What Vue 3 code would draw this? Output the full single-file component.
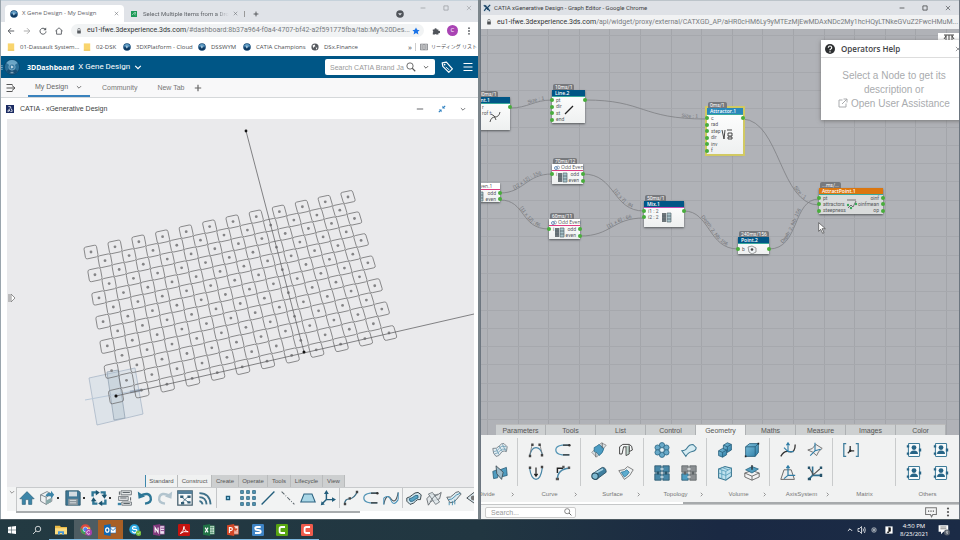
<script setup>
const corners = [[91, 252], [348, 197], [389, 333], [116, 396]]

function makeProjection([[x0, y0], [x1, y1], [x2, y2], [x3, y3]]) {
  const dx1 = x1 - x2, dx2 = x3 - x2, sx = x0 - x1 + x2 - x3
  const dy1 = y1 - y2, dy2 = y3 - y2, sy = y0 - y1 + y2 - y3
  const den = dx1 * dy2 - dx2 * dy1
  const g = (sx * dy2 - dx2 * sy) / den
  const h = (dx1 * sy - sx * dy1) / den
  const a = x1 - x0 + g * x1, b = x3 - x0 + h * x3
  const d = y1 - y0 + g * y1, e = y3 - y0 + h * y3
  return (i, j) => {
    const u = i / 22, v = j / 12, w = g * u + h * v + 1
    return [((a * u + b * v + x0) / w).toFixed(2), ((d * u + e * v + y0) / w).toFixed(2)]
  }
}

const project = makeProjection(corners)
const cells = []
for (let j = 0; j <= 12; j++) {
  for (let i = 0; i <= 22; i++) {
    if ((i + j) % 2) continue
    const s = 0.52, r = 0.36
    const at = (x, y) => project(i + x, j + y).join(' ')
    cells.push({
      dot: project(i, j),
      path: `M${at(-r, -s)}L${at(r, -s)}Q${at(s, -s)} ${at(s, -r)}L${at(s, r)}Q${at(s, s)} ${at(r, s)}L${at(-r, s)}Q${at(-s, s)} ${at(-s, r)}L${at(-s, -r)}Q${at(-s, -s)} ${at(-r, -s)}Z`
    })
  }
}

const bookmarks = [
  { icon: 'folder', text: '01-Dassault System...', w: 76 },
  { icon: 'folder', text: '02-DSK', w: 40 },
  { icon: 'compass', text: '3DXPlatform - Cloud', w: 75 },
  { icon: 'compass', text: 'DSSWYM', w: 45 },
  { icon: 'compass', text: 'CATIA Champions', w: 68 },
  { icon: 'globe', text: 'DSx.Finance', w: 60 }
]

const barTabs = [['Standard', 33], ['Construct', 34], ['Create', 27], ['Operate', 29], ['Tools', 23], ['Lifecycle', 32], ['View', 22]]
const tools = ['home', 'import', '.', 'save', '.', 'update', '.', 'struct', 'undo', 'redo', 'graph', 'rss', '|', 'dot', 'dots', 'line', 'dash', 'plane', 'axis', '|', 'spline', 'arc', 'curve3', '|', 'surf', 'surfx', 'surfy', 'surf2']

const ribbonTabs = ['Parameters', 'Tools', 'List', 'Control', 'Geometry', 'Maths', 'Measure', 'Images', 'Color']
const ribbon = [
  { name: 'Divide', more: true, icons: ['surfx', 'waves', 'cut', 'divide'] },
  { name: 'Curve', more: true, icons: ['bezier', 'arc', 'parab', 'fillet'] },
  { name: 'Surface', more: true, icons: ['extrude', 'loft', 'pipe', 'patch'] },
  { name: 'Topology', more: true, icons: ['flower', 'sheet', 'puzzle4', 'puzzleg'] },
  { name: 'Volume', more: true, icons: ['union', 'cube', 'glass', 'box'] },
  { name: 'AxisSystem', more: true, icons: ['axcurve', 'axsurf', 'axplane', 'ax3'] },
  { name: 'Matrix', more: false, icons: ['matrix'] },
  { name: 'Others', more: false, icons: ['user', 'user', 'user', 'user'] }
]

const nodes = [
  { t: 'Point.1', ms: '80ms/1', x: -10, y: 68, w: 40, h: 33, k: 'blue', l: ['r', 'rof  t:', '', ''], pad: true, r: [1, 0, 0, 0], g: 'n-curve', gx: 19 },
  { t: 'Line.2', ms: '10ms/1', x: 72, y: 61, w: 33, h: 33, k: 'blue', l: ['pt', 'dir', 'st', 'end'], r: [1, 0, 0, 0], g: 'n-line', gx: 11 },
  { t: 'Odd Even', ms: '70ms/12', x: 72, y: 135, w: 31, h: 20, k: 'white', l: ['i', null], rl: ['odd', 'even'], r: [1, 1], g: 'n-list', gx: 5 },
  { t: 'Even.1', x: -12, y: 154, w: 32, h: 19, k: 'white', l: [null, null], rl: ['odd', 'even'], r: [1, 1], g: 'n-list', gx: 5 },
  { t: 'Odd Even', ms: '60ms/11', x: 69, y: 190, w: 31, h: 20, k: 'white', l: ['i', null], rl: ['odd', 'even'], r: [1, 1], g: 'n-list', gx: 5 },
  { t: 'Mix.1', ms: '50ms/1', x: 164, y: 172, w: 40, h: 26, k: 'blue pink', l: ['i1 : 2', 'i2 : 2', null], r: [1, 0, 0], g: 'n-list', gx: 17 },
  { t: 'Attractor.1', ms: '0ms/1', x: 227, y: 79, w: 36, h: 46, k: 'sky', l: ['c', 'rad', 'step', 'dir', 'inv', 'f'], r: [1, 0, 0, 0, 0, 0], g: 'n-attr', gx: 14 },
  { t: 'AttractPoint.1', ms: '...ms/...', x: 339, y: 159, w: 64, h: 26, k: 'orange', l: ['pt', 'attractors', 'steepness'], rl: ['oinf', 'oinfmean', 'op'], r: [1, 1, 1], g: 'n-pts', gx: 27 },
  { t: 'Point.2', ms: '240ms/156', x: 258, y: 208, w: 31, h: 17, k: 'blue', l: ['b'], r: [1], g: 'n-pt', gx: 8 }
]

const edges = [
  { d: 'M30 79C48 79 54 71 72 71', text: 'Size : 1', off: '44%' },
  { d: 'M105 71C165 71 160 90 226 90', text: 'Size : 1', off: '80%' },
  { d: 'M263 90C300 92 300 176 339 176', text: 'Size : 1', off: '73%' },
  { d: 'M289 220C320 220 312 170 339 170', text: 'Depth: 2, Nb: 156', off: '20%' },
  { d: 'M204 182C230 182 228 220 258 220', text: 'Depth: 2, Nb: 156', off: '26%' },
  { d: 'M20 164C44 164 46 145 72 145', text: '[12 x 12] : 156', off: '26%' },
  { d: 'M20 171C46 171 40 200 69 200', text: '[11 x 12] : 66', off: '36%' },
  { d: 'M103 145C136 145 132 182 164 182', text: '[12 x 7] : 84', off: '48%' },
  { d: 'M100 207C132 207 132 189 164 189', text: '[11 x 6] : 66', off: '44%' }
]

const gridX = Array.from({ length: 60 }, (_, n) => Math.round(7 + n * 30.6))
const gridY = Array.from({ length: 60 }, (_, n) => Math.round(6 + n * 18.3))

const apps = ['win', 'find', 'files', 'chrome', 'outlook', 'skype', 'onenote', 'acrobat', 'excel', 'ppt', 'snagit', 'camg', 'camr']
</script>

<template>
  <svg class="defs" aria-hidden="true">
    <defs>
      <linearGradient id="gb" x1="0" y1="0" x2="1" y2="1"><stop offset="0" stop-color="#7fc0dc" /><stop offset="1" stop-color="#2b7da6" /></linearGradient>
      <symbol id="compass" viewBox="0 0 20 20"><circle cx="10" cy="10" r="9.500" fill="#164a78" /><path d="M2 8a8.500 8.500 0 0 1 16 0Q10 12 2 8Z" fill="#5f9cc4" /><path d="M8 6l5 4-5 4Z" fill="#b7d0e0" /><path d="M4 14q6 4 12 0" stroke="#0b2440" stroke-width="2" fill="none" /></symbol>
      <symbol id="compassbig" viewBox="0 0 20 20"><circle cx="10" cy="10" r="9.500" fill="#2b6f98" stroke="#0e4468" /><path d="M3 5a8.500 8.500 0 0 1 14 0L10 10Z" fill="#6aa5c6" /><path d="M3 15a8.500 8.500 0 0 0 14 0L10 10Z" fill="#174f75" /><circle cx="10" cy="10" r="4" fill="#3f7fa6" stroke="#9cc3d9" stroke-width=".7" /><path d="M9 8l3 2-3 2Z" fill="#e5f0f6" /><path d="M9 16v2M11 16v2" stroke="#d5e5ee" /></symbol>
      <symbol id="globe" viewBox="0 0 20 20"><circle cx="10" cy="10" r="9" fill="#55595e" /><path d="M4 6l5-2 2 4-4 2-1 4M12 11l4 1-3 5Z" fill="#fff" /></symbol>
      <symbol id="folder" viewBox="0 0 20 20"><path d="M2 1h16v18H2Z" fill="#f9d56e" /><path d="M2 17h16v2H2Z" fill="#e8bd4b" /></symbol>
      <symbol id="close" viewBox="0 0 20 20"><path d="M3 3L17 17M17 3L3 17" stroke="currentColor" stroke-width="2" /></symbol>
      <symbol id="min" viewBox="0 0 20 20"><path d="M2 10H18" stroke="currentColor" stroke-width="2.500" /></symbol>
      <symbol id="max" viewBox="0 0 20 20"><path d="M3 3H17V17H3Z" fill="none" stroke="currentColor" stroke-width="2.500" /></symbol>
      <symbol id="plus" viewBox="0 0 20 20"><path d="M10 2V18M2 10H18" stroke="currentColor" stroke-width="3" /></symbol>
      <symbol id="chev" viewBox="0 0 20 20"><path d="M3 7L10 14L17 7" fill="none" stroke="currentColor" stroke-width="3" /></symbol>
      <symbol id="down" viewBox="0 0 20 20"><circle cx="10" cy="10" r="9.500" fill="#50545a" /><path d="M5 8h10l-5 6Z" fill="#dee1e6" /></symbol>
      <symbol id="back" viewBox="0 0 20 20"><path d="M18 10H3M10 3L3 10L10 17" fill="none" stroke="currentColor" stroke-width="2.400" /></symbol>
      <symbol id="reload" viewBox="0 0 20 20"><path d="M16 6A7.500 7.500 0 1 0 17.500 11" fill="none" stroke="currentColor" stroke-width="2.400" /><path d="M18 1V8H11Z" fill="currentColor" /></symbol>
      <symbol id="house" viewBox="0 0 20 20"><path d="M1 10L10 2L19 10M4 8V18H16V8" fill="none" stroke="currentColor" stroke-width="2.200" /></symbol>
      <symbol id="lock" viewBox="0 0 20 20"><rect x="4" y="8" width="12" height="10" rx="1" fill="currentColor" /><path d="M6 9V5a4 4 0 0 1 8 0V9" fill="none" stroke="currentColor" stroke-width="2" /></symbol>
      <symbol id="star" viewBox="0 0 20 20"><path d="M10 1L13 7L19 8L14.500 12L16 19L10 15L4 19L5.500 12L1 8L7 7Z" fill="#1a73e8" /></symbol>
      <symbol id="ext" viewBox="0 0 20 20"><path d="M2 6H6A3 3 0 1 1 12 6H16V10A3 3 0 1 1 16 15V19H11A2.500 2.500 0 0 0 7 19H2V14A2.500 2.500 0 0 0 2 10Z" fill="#50545a" /></symbol>
      <symbol id="kebab" viewBox="0 0 20 20"><g fill="currentColor"><circle cx="10" cy="3" r="2.200" /><circle cx="10" cy="10" r="2.200" /><circle cx="10" cy="17" r="2.200" /></g></symbol>
      <symbol id="reading" viewBox="0 0 20 20"><path d="M1 3H19V17H1ZM10 3V17M3 7H8M3 10H8M3 13H8M12 7H17M12 10H17M12 13H17" fill="none" stroke="#55595e" stroke-width="1.700" /></symbol>
      <symbol id="mag" viewBox="0 0 20 20"><circle cx="8" cy="8" r="6.300" fill="none" stroke="currentColor" stroke-width="1.700" /><path d="M12.500 12.500L18.500 18.500" stroke="currentColor" stroke-width="2.200" /></symbol>
      <symbol id="tag" viewBox="0 0 20 20"><path d="M2 3L9 2L19 13L13 19L3 9Z" fill="none" stroke="currentColor" stroke-width="2" stroke-linejoin="round" /><circle cx="6" cy="6" r="1.500" fill="currentColor" /><path d="M8 10L14 15" stroke="currentColor" stroke-width="1.500" /></symbol>
      <symbol id="menu" viewBox="0 0 20 20"><path d="M1 3H19M1 10H19M1 17H19" stroke="currentColor" stroke-width="2.400" /></symbol>
      <symbol id="panel" viewBox="0 0 20 20"><path d="M1 3H13M1 10H18M1 17H13M12 5L18 10L12 15" fill="none" stroke="currentColor" stroke-width="2" /></symbol>
      <symbol id="ds" viewBox="0 0 20 20"><path d="M0 0H20V20H0Z" fill="#1b2c63" /><path d="M6 4Q14 3 12 7L9 9M4 16Q8 8 9 12T5 16M11 16Q18 17 15 13T15 9" fill="none" stroke="#fff" stroke-width="2" /></symbol>
      <symbol id="shrink" viewBox="0 0 20 20"><path d="M11 9V2L13.500 4.500L17 1L19 3L15.500 6.500L18 9ZM9 11V18L6.500 15.500L3 19L1 17L4.500 13.500L2 11Z" fill="#2b7fc0" /></symbol>

      <symbol id="home" viewBox="0 0 20 20"><path d="M1 11L10 2L19 11H16V18H12V12H8V18H4V11Z" fill="#3c85a8" stroke="#20566f" stroke-width=".7" /></symbol>
      <symbol id="import" viewBox="0 0 20 20"><path d="M2 6L10 2L16 5V14L9 18L2 14Z" fill="#eef1f2" stroke="#68727a" /><path d="M2 6L9 9V18M9 9L16 5" fill="none" stroke="#68727a" /><path d="M8 8Q10 2 15 4V1L19 6L15 11V8Q11 7 8 8Z" fill="#3c85a8" /><path d="M9 13l6-3v5l-6 3Z" fill="#8aa" /></symbol>
      <symbol id="save" viewBox="0 0 20 20"><path d="M1 1H17L19 3V19H1Z" fill="#3f7896" stroke="#2b5468" /><path d="M5 2H15V8H5Z" fill="#d4dde2" /><path d="M4 11H16V19H4Z" fill="#8c979e" /><path d="M6 13H14M6 16H14" stroke="#e8edef" /></symbol>
      <symbol id="update" viewBox="0 0 20 20"><g fill="none" stroke="#2e7796" stroke-width="3"><path d="M2 8V3H7M12 3H17V7M18 12V17H13M8 17H3V13" /></g><path d="M6 0L11 3L6 7ZM20 6L17 11L13 6ZM14 20L9 17L14 13ZM0 14L3 9L7 14Z" fill="#1c536e" /></symbol>
      <symbol id="struct" viewBox="0 0 20 20"><g fill="#e6e9ea" stroke="#5d656a"><path d="M5 1H18V6H5ZM2 8H14V13H2ZM6 15H18V19H6Z" /></g><path d="M7 3H16M4 10H12M8 17H16M3 2V6M17 9V13" stroke="#5d656a" stroke-width="1.300" /><path d="M1 16H5V19H1Z" fill="#3c85a8" /></symbol>
      <symbol id="undo" viewBox="0 0 20 20"><path d="M4 7Q15 2 17 9T10 17" fill="none" stroke="#2e7796" stroke-width="3" /><path d="M1 2L2 11L10 8Z" fill="#2e7796" /></symbol>
      <symbol id="redo" viewBox="0 0 20 20"><path d="M16 7Q5 2 3 9T10 17" fill="none" stroke="#b2c4ce" stroke-width="3" /><path d="M19 2L18 11L10 8Z" fill="#b2c4ce" /></symbol>
      <symbol id="graph" viewBox="0 0 20 20"><path d="M1 1H19V19H1Z" fill="#f6f8f9" stroke="#48606e" stroke-width="1.600" /><path d="M1 1H19V5H1Z" fill="#55809a" /><path d="M4 7H8V10H4ZM13 7H17V10H13ZM5 15H9V18H5ZM13 14H17V17H13Z" fill="#315d75" /><path d="M7 10L14 15M13 9L7 15" stroke="#315d75" /></symbol>
      <symbol id="rss" viewBox="0 0 20 20"><g fill="none" stroke="#3f718a" stroke-width="2.300"><path d="M3 14Q6 14 7 18M3 9Q11 9 12 18M3 4Q16 4 17 18" /></g></symbol>
      <symbol id="dot" viewBox="0 0 20 20"><path d="M8 8H12V12H8Z" fill="#7fc0dc" stroke="#1f5d7c" stroke-width="1.500" /></symbol>
      <symbol id="dots" viewBox="0 0 20 20"><g fill="#7fc0dc" stroke="#1f5d7c" stroke-width="1.300"><path d="M1 1h3v3h-3zM8.500 1h3v3h-3zM16 1h3v3h-3zM1 8.500h3v3h-3zM8.500 8.500h3v3h-3zM16 8.500h3v3h-3zM1 16h3v3h-3zM8.500 16h3v3h-3zM16 16h3v3h-3z" /></g></symbol>
      <symbol id="line" viewBox="0 0 20 20"><path d="M2 18L18 2" stroke="#235e7c" stroke-width="1.700" /></symbol>
      <symbol id="dash" viewBox="0 0 20 20"><path d="M2 2L18 18" stroke="#5e686e" stroke-width="1.300" stroke-dasharray="5 2 1 2" /></symbol>
      <symbol id="plane" viewBox="0 0 20 20"><path d="M5 5H15L19 15H1Z" fill="#a9d6e6" stroke="#2c6280" stroke-width="1.300" /></symbol>
      <symbol id="axis" viewBox="0 0 20 20"><path d="M8 12V3M8 12H18M8 12L3 17" fill="none" stroke="#235e7c" stroke-width="1.800" /><path d="M8 0L11 5H5ZM20 12L15 9V15ZM1 19L2 14L6 18Z" fill="#235e7c" /></symbol>
      <symbol id="spline" viewBox="0 0 20 20"><path d="M2 18Q2 11 8 11T18 2" fill="none" stroke="#3f6f86" stroke-width="1.600" /><path d="M1 16h3v3H1zM7 9h3v3H7zM16 1h3v3h-3z" fill="#444" /></symbol>
      <symbol id="arc" viewBox="0 0 20 20"><path d="M18 4H9Q1 5 1 10T9 16H18" fill="none" stroke="#5596b6" stroke-width="1.600" /><path d="M10 4H18M10 16H18" stroke="#333" stroke-width="1.500" /><circle cx="18" cy="4" r="1.500" fill="#333" /></symbol>
      <symbol id="curve3" viewBox="0 0 20 20"><path d="M1 18Q4 3 10 11T19 3" fill="none" stroke="#4b5257" stroke-width="1.300" /><path d="M1 10Q7 5 10 13T19 12M1 18V10M19 3V12" fill="none" stroke="#4a94ba" stroke-width="1.300" /></symbol>
      <symbol id="surf" viewBox="0 0 20 20"><path d="M1 10Q5 9 8 6T15 3L19 6L18 12Q14 11 12 14T5 18L1 14Z" fill="#cfe4ec" stroke="#3c464b" stroke-width="1.200" /><path d="M4 11Q8 10 10 8T15 7V10Q12 11 10 13T5 14Z" fill="#5aa5c5" stroke="#235e7c" /></symbol>
      <symbol id="surfx" viewBox="0 0 20 20"><path d="M1 11Q6 4 10 6T19 3L17 11Q12 13 9 13T3 19Z" fill="#e4e8ea" stroke="#555d62" /><path d="M3 5L8 3L17 15L12 18Z" fill="#dde6ea" fill-opacity=".8" stroke="#666e74" /><path d="M5 15L10 8L15 5" fill="none" stroke="#666e74" /></symbol>
      <symbol id="surfy" viewBox="0 0 20 20"><path d="M1 9Q6 10 9 6T16 2L19 5Q16 8 13 12T5 16Z" fill="#dce9ef" stroke="#555d62" stroke-width="1.100" /><path d="M3 12Q8 12 10 9T18 4M4 19V15M8 19V14M11 18V12" fill="none" stroke="#3a87aa" stroke-width="1.100" /></symbol>
      <symbol id="surf2" viewBox="0 0 20 20"><path d="M1 10L10 3L19 8L11 17Z" fill="#dce9ef" stroke="#454d52" stroke-width="1.200" /><circle cx="9" cy="10" r="3" fill="#777" /></symbol>

      <symbol id="waves" viewBox="0 0 20 20"><path d="M1 8Q6 9 9 5T15 2L19 6L18 12Q13 10 11 14T5 18L2 14Z" fill="#e6eef2" stroke="#68727a" /><path d="M2 12Q7 12 9 8T18 6M3 15Q8 14 10 11T18 9M5 8L9 16M9 5L13 12M13 3L17 11" fill="none" stroke="#6b9cb3" /></symbol>
      <symbol id="cut" viewBox="0 0 20 20"><path d="M2 9L18 3L17 12L3 18Z" fill="#5aa5c5" stroke="#333" /></symbol>
      <symbol id="divide" viewBox="0 0 20 20"><path d="M1 8L9 5L7 16L2 17ZM10 6L18 3L19 13L11 15Z" fill="#4f9cc0" stroke="#285c76" /><path d="M5 1L14 9L12 18L6 11Z" fill="#9dbccb" stroke="#39464e" /></symbol>
      <symbol id="bezier" viewBox="0 0 20 20"><path d="M2 18Q4 7 10 7T18 16" fill="none" stroke="#4a88a8" stroke-width="1.500" /><path d="M2 17L5 4M18 16L15 4" stroke="#777" /><path d="M4 2h3v3H4zM13 2h3v3h-3zM1 16h3v3H1zM16 15h3v3h-3z" fill="#444" /></symbol>
      <symbol id="parab" viewBox="0 0 20 20"><path d="M2 4Q4 18 10 18T18 3" fill="none" stroke="#4a88a8" stroke-width="1.500" /><path d="M10 3V13M8 11L10 14L12 11" fill="none" stroke="#222" stroke-width="1.500" /><path d="M1 2h3v3H1zM16 1h3v3h-3z" fill="#444" /></symbol>
      <symbol id="fillet" viewBox="0 0 20 20"><path d="M3 18Q3 5 18 4" fill="none" stroke="#4a88a8" stroke-width="1.800" /><path d="M3 10V4H10" fill="none" stroke="#222" stroke-width="1.800" /><path d="M1 16h4v3H1zM9 1h3v3H9zM16 2h3v3h-3z" fill="#555" /></symbol>
      <symbol id="extrude" viewBox="0 0 20 20"><path d="M1 13L13 1L19 4L7 19Z" fill="#d9e1e5" stroke="#888" /><path d="M4 7Q8 5 10 3L16 8Q15 14 10 17Q8 12 4 12Z" fill="#4b9dc4" stroke="#2a6a88" /><path d="M6 19V13M14 1V8" stroke="#555" /></symbol>
      <symbol id="loft" viewBox="0 0 20 20"><path d="M2 6L6 3H14Q18 4 18 10L14 12V6H7L5 15H2Z" fill="#f7f9f9" stroke="#444" stroke-width="1.200" /><path d="M10 6V17L14 15V4" fill="#c2d8cf" stroke="#444" stroke-width="1.100" /></symbol>
      <symbol id="pipe" viewBox="0 0 20 20"><path d="M2 11L14 3Q19 3 19 9L7 18Z" fill="#3f7f9f" stroke="#24485a" /><path d="M4 11L15 5" stroke="#a5d2e3" stroke-width="2" /><circle cx="5" cy="14" r="4" fill="#7eb9d1" stroke="#24485a" stroke-width="1.300" /></symbol>
      <symbol id="patch" viewBox="0 0 20 20"><path d="M1 7Q9 7 12 2L19 6Q16 14 8 18Z" fill="#eef1f2" stroke="#666" /><path d="M4 9Q8 9 11 6L14 9Q11 14 8 15Z" fill="#5eadd0" stroke="#2b7599" /></symbol>
      <symbol id="flower" viewBox="0 0 20 20"><g fill="#68a9c8" stroke="#2a6583"><circle cx="10" cy="4" r="3.300" /><circle cx="10" cy="16" r="3.300" /><circle cx="4.500" cy="7" r="3.300" /><circle cx="4.500" cy="13" r="3.300" /><circle cx="15.500" cy="7" r="3.300" /><circle cx="15.500" cy="13" r="3.300" /></g><circle cx="10" cy="10" r="3" fill="#e5f1f5" stroke="#2a6583" /></symbol>
      <symbol id="sheet" viewBox="0 0 20 20"><path d="M1 11Q6 11 8 7T15 3L19 7Q19 11 14 12T6 18Z" fill="#d5ebf2" stroke="#3d7893" stroke-width="1.300" /></symbol>
      <symbol id="puzzle4" viewBox="0 0 20 20"><path d="M1 1H9V9H1ZM11 1H19V9H11ZM1 11H9V19H1ZM11 11H19V19H11Z" fill="#4787a7" stroke="#29566c" /><path d="M5 8V12M15 8V12" stroke="#29566c" stroke-width="3" /><path d="M8 5H12M8 15H12" stroke="#c6dfea" stroke-width="2" /></symbol>
      <symbol id="puzzleg" viewBox="0 0 20 20"><path d="M1 1H9V9H1ZM11 1H19V9H11ZM11 11H19V19H11Z" fill="#8b8f92" stroke="#5f6467" /><path d="M1 11H9V19H1Z" fill="#4d9dc2" stroke="#29566c" /><path d="M5 8V12M15 8V12" stroke="#5f6467" stroke-width="3" /><path d="M8 5H12M8 15H12" stroke="#e0e3e4" stroke-width="2" /></symbol>
      <symbol id="union" viewBox="0 0 20 20"><g fill="url(#gb)" stroke="#255c78"><path d="M8 4L13 1L18 3V10L13 13L8 11Z" /><path d="M8 4L13 6L18 3M13 6V12" fill="none" /><path d="M2 11L7 8L12 10V16L7 19L2 17Z" /><path d="M2 11L7 13L12 10M7 13V19" fill="none" /></g></symbol>
      <symbol id="cube" viewBox="0 0 20 20"><path d="M2 6L7 2H18V13L14 18H2Z" fill="url(#gb)" stroke="#255c78" /><path d="M2 6H14L18 2M14 6V18" fill="none" stroke="#255c78" /><path d="M17 1h2v2h-2zM1 17h2v2H1z" fill="#222" /></symbol>
      <symbol id="glass" viewBox="0 0 20 20"><path d="M2 5L10 2L18 4V14L11 19L2 16Z" fill="#bfe2ee" stroke="#39758f" stroke-width="1.300" /><path d="M2 5L11 8L18 4M11 8V19M6 3L14 6M6 6V17M2 10L11 13L18 9" fill="none" stroke="#529bb8" /></symbol>
      <symbol id="box" viewBox="0 0 20 20"><path d="M1 10L10 7L19 10V15L10 19L1 15Z" fill="#f3f3f3" stroke="#555" /><path d="M1 10L10 14L19 10M10 14V19" fill="none" stroke="#555" /><path d="M2 6L10 2L18 5L10 10Z" fill="#539ebf" stroke="#2a6583" /><path d="M10 0V6" stroke="#222" stroke-width="1.500" /></symbol>
      <symbol id="axcurve" viewBox="0 0 20 20"><path d="M1 18Q5 10 12 12T19 3" fill="none" stroke="#333" stroke-width="1.600" /><path d="M10 12V2M10 12H17M10 12L5 7M8 4L10 1L12 4" fill="none" stroke="#2f7ca5" stroke-width="1.400" /></symbol>
      <symbol id="axsurf" viewBox="0 0 20 20"><path d="M1 10Q7 10 11 3L19 8Q14 11 12 17Q8 12 1 10Z" fill="#eee" stroke="#666" stroke-width="1.100" /><path d="M10 11V1M10 11L17 9M10 11L4 17" stroke="#2f7ca5" stroke-width="1.400" /></symbol>
      <symbol id="axplane" viewBox="0 0 20 20"><path d="M5 6H14L18 18H1Z" fill="#eee" stroke="#666" stroke-width="1.200" /><path d="M10 13V2M10 13H19M10 13L5 17M8 4L10 1L12 4" fill="none" stroke="#2f7ca5" stroke-width="1.500" /></symbol>
      <symbol id="ax3" viewBox="0 0 20 20"><path d="M7 13V2M7 13H18M7 13L2 18" stroke="#2f6f90" stroke-width="2" /><path d="M7 13L16 5M3 4L8 12" stroke="#555" stroke-width="1.300" /><path d="M16 2h3v3h-3zM1 2h3v3H1zM16 11h3v4h-3zM1 16h4v3H1z" fill="#26536b" /></symbol>
      <symbol id="matrix" viewBox="0 0 20 20"><path d="M4 2H1V18H4M16 2H19V18H16" fill="none" stroke="#3f7d9c" stroke-width="1.600" /><path d="M9 11V5M9 11H14M9 11L6 14" stroke="#333" stroke-width="1.600" /><circle cx="9" cy="11" r="1.500" fill="#222" /></symbol>
      <symbol id="user" viewBox="0 0 20 20"><rect x="3" y="2" width="14" height="16" rx="1" fill="#f6fafb" stroke="#3d7b99" stroke-width="1.300" /><circle cx="10" cy="7" r="3" fill="#266486" /><path d="M5 15Q5 10.500 10 10.500T15 15Z" fill="#266486" /><path d="M1 4h3v3H1zM1 13h3v3H1zM16 8h3v4h-3z" fill="#266486" /></symbol>

      <symbol id="n-curve" viewBox="0 0 12 12"><path d="M1 11Q2 6 6 6T11 1M2 3Q6 4 7 9" fill="none" stroke="#444" stroke-width=".9" /></symbol>
      <symbol id="n-line" viewBox="0 0 12 12"><path d="M2 10L10 2" stroke="#222" stroke-width="1.200" /></symbol>
      <symbol id="n-list" viewBox="0 0 12 12"><path d="M1 2H5V11H1Z" fill="#6c7478" /><path d="M6 2H10V11H6Z" fill="#a7c4cb" stroke="#596b70" stroke-width=".7" /><path d="M1 5H5M1 8H5M6 5H10M6 8H10" stroke="#56666c" stroke-width=".8" /></symbol>
      <symbol id="n-attr" viewBox="0 0 12 12"><path d="M1 2L3 11L4 2M6 2H11M7 5H11V8H7ZM7 9H11V11H7Z" fill="none" stroke="#333" stroke-width=".9" /></symbol>
      <symbol id="n-pts" viewBox="0 0 12 12"><path d="M1 2H10M2 10L5 7L7 9L10 3" fill="none" stroke="#666" stroke-width=".9" /><g fill="#39a85b"><circle cx="2" cy="7" r="1.200" /><circle cx="5" cy="10" r="1.200" /><circle cx="10" cy="6" r="1.200" /></g></symbol>
      <symbol id="n-pt" viewBox="0 0 12 12"><path d="M2 4L6 3L10 5V9L6 11L3 9Z" fill="#eef2f4" stroke="#777" stroke-width=".7" /><circle cx="6" cy="6.500" r="1.300" fill="#444" /></symbol>

      <symbol id="win" viewBox="0 0 20 20"><path d="M2 4L9 3V9.500H2ZM10 3L18 2V9.500H10ZM2 10.500H9V17L2 16ZM10 10.500H18V18L10 17Z" fill="#fff" /></symbol>
      <symbol id="find" viewBox="0 0 20 20"><circle cx="12" cy="8" r="5.500" fill="none" stroke="#fff" stroke-width="1.500" /><path d="M8 12L2 18" stroke="#fff" stroke-width="1.500" /></symbol>
      <symbol id="files" viewBox="0 0 20 20"><path d="M0 3H8L10 5H20V17H0Z" fill="#e9bb47" /><path d="M0 7H20V17H0Z" fill="#fbdc81" /><path d="M5 12H15V18H12V15H8V18H5Z" fill="#4596d8" /></symbol>
      <symbol id="chrome" viewBox="0 0 20 20"><circle cx="9" cy="9" r="8.500" fill="#dd4a3d" /><path d="M1 6Q0 17 9 17.500L12 11L6 11Z" fill="#3a9d57" /><path d="M17 6Q18 17 9 17.500L12 10L11 6Z" fill="#f4c637" /><circle cx="9" cy="9" r="4" fill="#4b87ef" stroke="#fff" /><circle cx="14.500" cy="14" r="5.500" fill="#a83fae" /><path d="M16.500 12a3 3 0 1 0 0 4" fill="none" stroke="#fff" stroke-width="1.300" /></symbol>
      <symbol id="outlook" viewBox="0 0 20 20"><path d="M10 5H20V15H10Z" fill="#fff" stroke="#1c6cb5" /><path d="M10 6L15 11L20 6" fill="none" stroke="#1c6cb5" stroke-width="1.500" /><path d="M0 2L11 0V20L0 18Z" fill="#1068b5" /><ellipse cx="5.500" cy="10" rx="2.700" ry="3.700" fill="none" stroke="#fff" stroke-width="2" /></symbol>
      <symbol id="skype" viewBox="0 0 20 20"><circle cx="9" cy="9" r="8.500" fill="#25a5df" /><path d="M12.500 5.500Q7 3 6 6T10 9T12 13T5 12" fill="none" stroke="#fff" stroke-width="2" /><circle cx="16" cy="15.500" r="4.500" fill="#74bd3d" /><path d="M14 15.500L15.500 17L18 14" fill="none" stroke="#fff" /></symbol>
      <symbol id="onenote" viewBox="0 0 20 20"><path d="M9 3H19V17H9Z" fill="#eddff1" stroke="#803583" /><path d="M13 7H19M13 11H19" stroke="#803583" stroke-width="1.500" /><path d="M0 2L12 0V20L0 18Z" fill="#80397b" /><path d="M3.500 14V6L8.500 14V6" fill="none" stroke="#fff" stroke-width="1.800" /></symbol>
      <symbol id="acrobat" viewBox="0 0 20 20"><rect width="20" height="20" rx="2" fill="#c4130f" /><path d="M4 16Q10 11 10 4Q10 11 17 13Q9 11 4 16Z" fill="none" stroke="#fff" stroke-width="1.600" /></symbol>
      <symbol id="excel" viewBox="0 0 20 20"><path d="M9 3H19V17H9Z" fill="#e5f2ea" stroke="#217346" /><path d="M12 6H18M12 10H18M12 14H18M15 4V16" stroke="#217346" /><path d="M0 2L12 0V20L0 18Z" fill="#217346" /><path d="M3.500 6L8.500 14M8.500 6L3.500 14" stroke="#fff" stroke-width="1.800" /></symbol>
      <symbol id="ppt" viewBox="0 0 20 20"><path d="M9 3H19V17H9Z" fill="#fbe8e2" stroke="#d24726" /><path d="M12 12H18M12 15H18M13 5A3 3 0 1 0 17 8H13Z" fill="#d24726" stroke="#d24726" /><path d="M0 2L12 0V20L0 18Z" fill="#d24726" /><path d="M4 15V6H6Q9 6 9 8.500T6 11H4" fill="none" stroke="#fff" stroke-width="1.800" /></symbol>
      <symbol id="snagit" viewBox="0 0 20 20"><rect width="20" height="20" rx="2" fill="#3e84c4" /><path d="M14.500 5H8Q5 5 5.500 7.500T10 10T14.500 12.500T12 15H5" fill="none" stroke="#fff" stroke-width="3" /></symbol>
      <symbol id="camg" viewBox="0 0 20 20"><rect width="20" height="20" rx="2" fill="#58a512" /><path d="M15 5H9Q6 5 6 8V12Q6 15 9 15H15" fill="none" stroke="#fff" stroke-width="3" /></symbol>
      <symbol id="camr" viewBox="0 0 20 20"><rect width="20" height="20" rx="2" fill="#ef5b4c" /><path d="M15 5H9Q6 5 6 8V12Q6 15 9 15H15" fill="none" stroke="#fff" stroke-width="3" /></symbol>
    </defs>
  </svg>

  <main class="desktop">
    <div class="windows">
      <section class="win left">
        <header class="strip">
          <div class="tab on"><svg class="i8"><use href="#compass" /></svg><span>X Gene Design - My Design</span><button aria-label="Close tab"><svg class="i5"><use href="#close" /></svg></button></div>
          <div class="tab"><svg class="i6 sheetico" viewBox="0 0 20 20"><path d="M0 0H20V20H0Z" fill="#1d9a58" /><path d="M4 13L9 8L15 13M11 5H15V9" stroke="#fff" stroke-width="2" fill="none" /></svg><span class="faded">Select Multiple Items from a Dro</span><button aria-label="Close tab"><svg class="i5"><use href="#close" /></svg></button></div>
          <button class="newtab" aria-label="New tab"><svg class="i6"><use href="#plus" /></svg></button>
          <svg class="i8 push"><use href="#down" /></svg>
          <div class="ctl dim"><button aria-label="Minimize"><svg class="i6"><use href="#min" /></svg></button><button aria-label="Maximize"><svg class="i6"><use href="#max" /></svg></button><button aria-label="Close"><svg class="i6"><use href="#close" /></svg></button></div>
        </header>
        <div class="nav">
          <button aria-label="Back"><svg class="i8"><use href="#back" /></svg></button>
          <button aria-label="Forward" class="off"><svg class="i8 flip"><use href="#back" /></svg></button>
          <button aria-label="Reload"><svg class="i8"><use href="#reload" /></svg></button>
          <button aria-label="Home"><svg class="i8"><use href="#house" /></svg></button>
          <div class="omni"><svg class="i6"><use href="#lock" /></svg><p><b>eu1-ifwe.3dexperience.3ds.com</b>/#dashboard:8b37a964-f0a4-4707-bf42-a2f591775fba/tab:My%20Des...</p><svg class="i8"><use href="#star" /></svg></div>
          <svg class="i8"><use href="#ext" /></svg><span class="avatar">C</span><svg class="i8"><use href="#kebab" /></svg>
        </div>
        <nav class="marks">
          <a v-for="b in bookmarks" :key="b.text" href="#" :style="{ width: b.w + 'px' }"><svg class="i8"><use :href="'#' + b.icon" /></svg>{{ b.text }}</a>
          <span class="more">»</span>
          <a href="#" class="read"><svg class="i8"><use href="#reading" /></svg>リーディング リスト</a>
        </nav>
        <header class="dash">
          <svg class="i5"><use href="#menu" /></svg>
          <svg class="i16"><use href="#compassbig" /></svg>
          <strong>3DDashboard</strong><span>X Gene Design</span><svg class="i8"><use href="#chev" /></svg>
          <form class="search"><input aria-label="Search" placeholder="Search CATIA Brand Ja"><svg class="i10"><use href="#mag" /></svg><svg class="i6"><use href="#chev" /></svg></form>
          <svg class="i12"><use href="#tag" /></svg><svg class="i10"><use href="#menu" /></svg>
        </header>
        <nav class="pages">
          <button class="tog" aria-label="Panel"><svg class="i10"><use href="#panel" /></svg></button>
          <a href="#" class="cur">My Design<svg class="i6"><use href="#chev" /></svg></a><a href="#">Community</a><a href="#">New Tab</a>
          <button aria-label="Add tab"><svg class="i8"><use href="#plus" /></svg></button>
        </nav>
        <div class="wtitle"><svg class="i8"><use href="#ds" /></svg><span>CATIA - xGenerative Design</span><svg class="i8"><use href="#min" /></svg><svg class="i8"><use href="#shrink" /></svg><svg class="i6"><use href="#chev" /></svg></div>
        <div class="view">
          <svg class="scene">
            <g transform="translate(-7 -119)">
              <path d="M89 378L135 368L143 414L97 425Z" fill="#c5d6e4" fill-opacity=".35" stroke="#a9b8c8" stroke-width=".8" />
              <path d="M107 372L118 370L125 418L114 420Z" fill="#a9bccc" fill-opacity=".35" stroke="#96a5b4" stroke-width=".8" />
              <path d="M85 400L145 389" stroke="#b9c8d8" />
              <path d="M130 392L142 390" stroke="#667c99" stroke-width="3" opacity=".4" />
              <path v-for="(c, n) in cells" :key="n" :d="c.path" fill="none" stroke="#6e6e70" stroke-width=".8" />
              <circle v-for="(c, n) in cells" :key="'d' + n" :cx="c.dot[0]" :cy="c.dot[1]" r="1.400" fill="#848486" />
              <path d="M246 131L304 352M116 396L474 314" fill="none" stroke="#666668" stroke-width=".8" />
              <g fill="#111"><circle cx="246" cy="131" r="1.400" /><circle cx="304" cy="352" r="1.500" /><circle cx="116" cy="396" r="1.500" /></g>
              <path d="M9 294V302M11 294L15 298L11 302Z" fill="#fff" stroke="#777" stroke-width=".8" />
            </g>
          </svg>
          <div class="btabs"><button v-for="([t, w], n) in barTabs" :key="t" :class="{ lite: n < 2 }" :style="{ width: w + 'px' }">{{ t }}</button></div>
        </div>
        <div class="bar">
          <svg class="i6 fold"><use href="#chev" /></svg>
          <div class="tools">
            <template v-for="(t, n) in tools" :key="n">
              <i v-if="t === '|'" class="sep" /><i v-else-if="t === '.'" class="pt" />
              <button v-else :aria-label="t"><svg class="i16"><use :href="'#' + t" /></svg></button>
            </template>
          </div>
        </div>
        <div class="track"><i /></div>
      </section>

      <section class="win right">
        <header class="title"><svg class="i8" viewBox="0 0 20 20"><path d="M1 1H19V19H1Z" fill="#d2dce5" /><path d="M2 3L9 9L3 17M18 2L11 9L17 18M6 3L12 14" stroke="#1c4568" stroke-width="3" fill="none" /></svg><h1>CATIA xGenerative Design - Graph Editor - Google Chrome</h1>
          <div class="ctl"><button aria-label="Minimize"><svg class="i6"><use href="#min" /></svg></button><button aria-label="Maximize"><svg class="i6"><use href="#max" /></svg></button><button aria-label="Close"><svg class="i6"><use href="#close" /></svg></button></div>
        </header>
        <div class="url"><svg class="i6"><use href="#lock" /></svg><p><b>eu1-ifwe.3dexperience.3ds.com</b>/api/widget/proxy/external/CATXGD_AP/aHR0cHM6Ly9yMTEzMjEwMDAxNDc2My1hcHQyLTNkeGVuZ2FwcHMuM...</p></div>
        <div class="graph">
          <svg class="scene">
            <path v-for="x in gridX" :key="'x' + x" :d="`M${x}.5 0V2000`" stroke="#a3a5aa" />
            <path v-for="y in gridY" :key="'y' + y" :d="`M0 ${y}.5H3000`" stroke="#a6a8ad" />
            <path v-for="(e, n) in edges" :id="'edge' + n" :key="n" :d="e.d" fill="none" stroke="#7d7f83" stroke-width=".8" />
            <text v-for="(e, n) in edges" :key="'t' + n" dy="-1" class="elabel"><textPath :href="'#edge' + n" :startOffset="e.off">{{ e.text }}</textPath></text>
          </svg>
          <article v-for="(n, k) in nodes" :key="k" class="node" :class="n.k" :style="{ left: n.x + 'px', top: n.y + 'px', width: n.w + 'px', height: n.h + 'px' }">
            <small v-if="n.ms" :class="{ shift: n.pad }">{{ n.ms }}</small>
            <h2>{{ n.t }}</h2>
            <svg v-if="n.ms && n.k === 'white'" class="badge" viewBox="0 0 12 10"><circle cx="4" cy="6" r="3" fill="none" stroke="#3f6fa8" stroke-width="1.500" /><circle cx="8" cy="5" r="3" fill="none" stroke="#7d93ad" stroke-width="1.500" /></svg>
            <svg class="glyph" :style="{ left: n.gx + 'px' }"><use :href="'#' + n.g" /></svg>
            <ul class="ports"><li v-for="(p, q) in n.l" :key="q"><i v-if="p !== null && !n.pad" class="in" /><span :class="{ shift: n.pad }">{{ p }}</span><span class="out">{{ n.rl && n.rl[q] }}</span><i v-if="n.r[q]" class="o" /></li></ul>
          </article>
          <button class="peek" aria-label="Panels"><svg viewBox="0 0 12 8"><path d="M1 2H11M3 2V8M6 2V8M9 2V8M1 6L3 3M11 6L9 3" stroke="#444" fill="none" /></svg></button>
          <aside class="help">
            <header><svg viewBox="0 0 20 20" class="i10"><circle cx="10" cy="10" r="10" fill="#2d2f31" /><path d="M6.500 7.500Q7 4 10 4T13.500 7.500Q13.500 9 11 10.500Q10 11 10 12.500M10 14.500V17" fill="none" stroke="#fff" stroke-width="2.400" /></svg><h3>Operators Help</h3><svg class="i6"><use href="#close" /></svg></header>
            <p>Select a Node to get its<br>description or<br><a href="#"><svg viewBox="0 0 20 20" class="i10"><path d="M9 4H2V18H16V11M11 2H18V9M18 2L8 12" fill="none" stroke="currentColor" stroke-width="2" /></svg> Open User Assistance</a></p>
          </aside>
          <svg class="cursor" viewBox="0 0 12 18"><path d="M1 1V14L4 11L7 17L9 16L6 10H11Z" fill="#fff" stroke="#444" /></svg>
          <nav class="rtabs"><button v-for="t in ribbonTabs" :key="t" :class="{ on: t === 'Geometry' }">{{ t }}</button></nav>
        </div>
        <div class="ribbon">
          <section v-for="g in ribbon" :key="g.name">
            <div class="pics"><button v-for="(c, q) in g.icons" :key="q" :aria-label="g.name + ' ' + (q + 1)"><svg class="i16"><use :href="'#' + c" /></svg></button></div>
            <footer>{{ g.name }}<svg v-if="g.more" class="i5"><use href="#chev" /></svg></footer>
          </section>
        </div>
        <div class="thumb" />
        <form class="seek"><label><input aria-label="Search operators" placeholder="Search..."><svg class="i8"><use href="#mag" /></svg></label>
          <svg class="i12" viewBox="0 0 20 20"><path d="M1 3H19V14H13L11 18L9 14H1Z" fill="none" stroke="#777" stroke-width="1.700" /><path d="M5 8.500H7M9 8.500H11M13 8.500H15" stroke="#555" stroke-width="2" /></svg><svg class="i10"><use href="#kebab" /></svg></form>
      </section>
    </div>

    <footer class="task">
      <div class="apps"><button v-for="(a, n) in apps" :key="a" :aria-label="a" :class="['app-' + a, { run: n > 1 }]"><svg :class="n < 2 ? 'i10' : 'i12'"><use :href="'#' + a" /></svg></button></div>
      <div class="tray">
        <svg class="i6 up"><use href="#chev" /></svg>
        <svg class="i10" viewBox="0 0 20 20"><path d="M2 7H5L9 3V17L5 13H2ZM12 7Q14 10 12 13M15 4Q18 10 15 16" fill="none" stroke="#fff" stroke-width="1.500" /></svg>
        <svg class="i6" viewBox="0 0 20 20"><circle cx="10" cy="10" r="8" fill="#5b6778" stroke="#cdd3da" stroke-width="1.500" /><path d="M6 6L14 14M14 6L6 14" stroke="#cdd3da" stroke-width="2" /></svg>
        <svg class="i8 ime" viewBox="0 0 20 20"><path d="M1 1H19V19H1Z" fill="#fff" /><path d="M10 3V14Q9 17 5 15M13 4V14" stroke="#111" stroke-width="3" fill="none" /></svg>
        <time>4:50 PM<br>8/23/2021</time>
        <svg class="i12" viewBox="0 0 20 20"><path d="M1 2H17V13H9L5 17V13H1Z" fill="#fff" /><path d="M4 5H14M4 8H14" stroke="#333" /><circle cx="15" cy="14" r="5" fill="#59616c" /><path d="M16.500 13A1.500 1.500 0 1 0 16 14.500L15 17" stroke="#fff" fill="none" /></svg>
      </div>
    </footer>
  </main>
</template>

<style>
body { margin: 0; background: #22363e; }
</style>

<style scoped>
.desktop { min-height: 100vh; display: flex; flex-direction: column; font: 6px/1 "Open Sans", "Noto Sans CJK JP", sans-serif; color: #4a4d50; overflow: hidden; }
.desktop * { box-sizing: border-box; }
.defs { position: absolute; width: 0; height: 0; }
button { border: 0; padding: 0; margin: 0; background: none; font: inherit; color: inherit; display: grid; place-items: center; }
a { color: inherit; text-decoration: none; }
p, h1, h2, h3, ul { margin: 0; padding: 0; font-size: inherit; font-weight: 400; list-style: none; }
svg { display: block; flex: none; }
input { min-width: 0; border: 0; padding: 0; background: none; font: inherit; outline: 0; }
input::placeholder { color: #999; opacity: 1; }
.i5 { width: 5px; height: 5px; } .i6 { width: 6px; height: 6px; } .i8 { width: 8px; height: 8px; }
.i10 { width: 10px; height: 10px; } .i12 { width: 12px; height: 12px; } .i16 { width: 16px; height: 16px; }
.windows { flex: 1; display: grid; grid-template-columns: minmax(0, 1fr) minmax(0, 1fr); }
.win { display: flex; flex-direction: column; min-width: 0; background: #fff; overflow: hidden; }
.left { border-right: 2px solid #7b858b; border-left: 1px solid #9aa5ad; }
.right { border-right: 1px solid #6d7680; border-left: 1px solid #6d7680; }

.strip { display: flex; align-items: center; height: 22px; padding: 4px 6px 0 4px; background: #e0e3e8; border-top: 1px solid #c6d2db; }
.tab { display: flex; align-items: center; gap: 4px; height: 100%; width: 119px; padding: 0 5px; color: #5f6368; white-space: nowrap; }
.tab span { flex: 1; line-height: 9px; }
.tab.on { background: #fff; border-radius: 4px 4px 0 0; }
.tab .sheetico { margin: 0 2px; }
.tab .faded { min-width: 0; font-family: Roboto, sans-serif; mask-image: linear-gradient(90deg, #000 85%, transparent); }
.newtab { padding-left: 8px; margin-left: 1px; border-left: 1px solid #999; }
.push { margin-left: auto; margin-right: 16px; }
.ctl { display: flex; gap: 17px; align-self: flex-start; }
.dim { color: #9a9da1; }
.nav { display: flex; align-items: center; gap: 8px; height: 17px; padding: 0 5px 0 6px; color: #55595e; }
.off { color: #aaa; } .flip { transform: scaleX(-1); }
.omni { flex: 1; min-width: 0; display: flex; align-items: center; gap: 5px; height: 13px; padding: 0 4px 0 5px; background: #f1f3f4; border-radius: 7px; }
.omni p { flex: 1; min-width: 0; } .omni p, .url p { font: 7px/11px Roboto, sans-serif; white-space: nowrap; color: #777b80; } .omni b, .url b { font-weight: 400; color: #303336; }
.avatar { width: 11px; height: 11px; line-height: 11px; border-radius: 50%; background: #a944b4; color: #fff; text-align: center; margin: 0 -1px 0 -1px; }
.marks { display: flex; align-items: center; height: 17px; padding: 0 1px 2px 6px; white-space: nowrap; }
.marks a { display: flex; align-items: center; gap: 5px; flex: none; }
.marks .more { margin-left: auto; padding-right: 3px; font-size: 8px; }
.marks .read { border-left: 1px solid #ccc; padding-left: 4px; gap: 3px; font-size: 5px; }
.dash { display: flex; align-items: center; height: 22px; padding: 0 5px 0 0; background: #005686; color: #fff; font-size: 7px; white-space: nowrap; }
.dash .i5 { margin-left: -3px; color: #cde; } .dash .i16 { margin: 0 7px 0 1px; }
.dash strong { font-size: 7px; margin-right: 4px; } .dash span { margin-right: 4px; font: 8px/10px Roboto, sans-serif; }
.search { width: 110px; height: 16px; margin-left: auto; margin-right: 6px; display: flex; align-items: center; gap: 7px; padding: 0 6px 0 5px; background: #fff; border-radius: 2px; color: #555; font: 7px "Liberation Sans", sans-serif; }
.search input { flex: 1; } .search .i10 { margin-left: -7px; } .dash .i12 { margin-right: 10px; }
.pages { display: flex; align-items: center; height: 20px; background: #f8f8f9; border-bottom: 1px solid #d5d8da; font: 7px "Liberation Sans", sans-serif; color: #777; padding-left: 5px; }
.pages a { margin-right: 20px; } .tog { margin-right: 12px; color: #555; }
.pages .cur { display: flex; align-items: center; justify-content: space-between; align-self: stretch; width: 62px; padding: 0 8px 0 7px; margin-right: 12px; border-bottom: 2px solid #3a82bd; color: #666; }
.pages button:last-child { margin-left: -11px; color: #666; }
.wtitle { display: flex; align-items: center; height: 21px; padding: 0 12px 0 5px; gap: 14px; color: #66696d; }
.wtitle span { flex: 1; margin-left: -8px; font: 7px "Liberation Sans", sans-serif; color: #3c3f42; white-space: nowrap; }
.view { flex: 1; position: relative; margin: 0 4px 0 6px; background: #eaeaec; display: flex; align-items: flex-end; overflow: hidden; }
.scene { position: absolute; inset: 0; width: 100%; height: 100%; }
.btabs { position: relative; display: flex; height: 12px; margin-left: 138px; font: 6px "Liberation Sans", sans-serif; color: #555; }
.btabs button { background: #cdcfd0; border-right: 1px solid #b9bbbc; } .btabs .lite { background: #f0f1f1; } .btabs button:first-child { border-left: 1px solid #3d88ad; }
.bar { display: flex; height: 24px; margin: 0 4px 0 6px; color: #888; background: #f2f3f3; }
.fold { margin: 2px 1px 0 2px; }
.tools { flex: 1; min-width: 0; display: flex; align-items: center; padding-bottom: 3px; border-left: 1px solid #c5c7c8; border-top: 1px solid #c8cacc; overflow: hidden; }
.tools button { flex: 0 0 20px; height: 20px; } .tools .sep { flex: 0 0 1px; height: 20px; margin: 0 1px; background: #c4c6c8; }
.pt { flex: 0 0 6px; height: 2px; border-left: 2px solid #333; } .tools button:first-child { margin-left: 0; }
.track { height: 8px; margin: 0 4px 0 15px; } .track i { display: block; width: 75%; height: 2px; background: #a9acae; }

.title { display: flex; align-items: center; gap: 4px; height: 15px; padding: 0 8px 0 2px; background: #dee1e6; border-top: 1px solid #bcc4ca; color: #3d4043; }
.title h1 { flex: 1; margin-left: -1px; font-family: Roboto, sans-serif; white-space: nowrap; } .title .ctl { align-self: center; }
.url { display: flex; align-items: center; gap: 5px; height: 14px; padding: 0 2px 0 5px; background: #f1f2f3; }
.graph { flex: 1; position: relative; background: #b0b2b7; overflow: hidden; display: flex; align-items: flex-end; margin-left: -1px; }
.elabel { font: 5px "Liberation Sans", sans-serif; fill: #6f7175; }
.node { position: absolute; display: flex; flex-direction: column; background: linear-gradient(#fff, #eef0f0); box-shadow: 0 1px 2px #55585c; font: 5px/1 Roboto, sans-serif; color: #55585a; }
.node h2 { flex: 0 0 7px; padding: 0 3px; line-height: 6px; background: #005686; color: #fff; border-bottom: 1px solid #3aa99c; white-space: nowrap; font-family: "Open Sans", sans-serif; font-weight: 600; }
.node.white h2 { background: #fff; color: #555; border-color: #dc3f83; padding-left: 9px; font-weight: 400; }
.node.pink h2 { border-color: #c74eb5; } .node.sky h2 { background: #2988ba; } .node.orange h2 { background: #db760f; }
.node.orange { background: #d9dbdb; } .node.sky { outline: 2px solid #d1c963; outline-offset: 0; }
.node small { position: absolute; left: 1px; bottom: 100%; height: 6px; line-height: 6px; padding: 0 2px; font-size: 5px; background: #77797d; color: #fff; border-radius: 2px 2px 0 0; white-space: nowrap; }
.badge { position: absolute; left: 2px; top: 1px; width: 6px; height: 5px; }
.ports { flex: 1; display: flex; flex-direction: column; position: relative; }
.ports li { flex: 1; display: flex; align-items: center; position: relative; padding: 0 4px; white-space: nowrap; }
.ports .out { margin-left: auto; }
.shift { padding-left: 8px !important; }
.in, .o { position: absolute; left: -2px; width: 4px; height: 4px; border-radius: 2px; background: #48ad3c; } .o { left: auto; right: -2px; }
.glyph { position: absolute; width: 12px; height: 12px; top: calc(50% - 3px); }
.peek { position: absolute; right: 0; top: 4px; width: 21px; height: 14px; background: #fff; place-items: start center; } .peek svg { width: 12px; height: 8px; }
.help { position: absolute; right: -8px; top: 11px; width: 146px; background: #fff; box-shadow: 0 1px 4px #777; }
.help header { display: flex; align-items: center; gap: 6px; height: 18px; padding: 0 6px 0 4px; border-bottom: 1px solid #ddd; color: #55585c; }
.help h3 { flex: 1; font-size: 8px; font-weight: 600; color: #3e4144; }
.help p { padding: 11px 0 9px; text-align: center; font: 10px/14px "Liberation Sans", sans-serif; color: #a9abae; white-space: nowrap; } .help p svg { display: inline-block; vertical-align: -1px; }
.cursor { position: absolute; left: 338px; top: 193px; width: 8px; height: 12px; }
.rtabs { position: relative; flex: 1; display: flex; margin-left: 16px; height: 11px; font: 7px "Liberation Sans", sans-serif; color: #555; }
.rtabs button { flex: 0 0 50px; background: #cdd0d1; border-right: 1px solid #aeb1b3; border-top: 1px solid #bbb; } .rtabs .on { background: #f1f2f2; }
.ribbon { display: flex; justify-content: flex-end; height: 67px; padding: 3px 0 0; background: #f1f2f2; color: #777; overflow: hidden; }
.ribbon section { flex: 0 0 63px; position: relative; display: flex; flex-direction: column; }
.pics { display: grid; grid-template-columns: 27px 27px; grid-auto-rows: 23px; justify-content: center; height: 48px; border-right: 1px solid #c9cbcc; }
.ribbon section:last-child .pics { border: 0; }
.ribbon footer { flex: 1; display: flex; align-items: center; justify-content: center; position: relative; font: 6px "Liberation Sans", sans-serif; }
.ribbon footer svg { position: absolute; right: 3px; transform: rotate(-90deg); }
.thumb { height: 2px; margin-left: 202px; background: #a7aaac; }
.seek { display: flex; align-items: center; height: 15px; padding: 1px 6px 1px 4px; gap: 6px; border-top: 1px solid #c5c7c8; background: #f4f5f5; color: #555; }
.seek label { display: flex; align-items: center; width: 91px; height: 11px; margin-right: auto; padding: 0 3px 0 5px; border: 1px solid #ccc; border-radius: 2px; background: #fff; font: 7px "Liberation Sans", sans-serif; } .seek input { flex: 1; }

.task { display: flex; justify-content: space-between; align-items: center; height: 21px; background: linear-gradient(90deg, #233a42, #213641 50%, #1a2943 75%, #1b2b46); color: #fff; border-top: 1px solid #4c5960; }
.apps { display: grid; grid-template-columns: repeat(13, 1fr); width: 319px; height: 100%; }
.apps .run { border-bottom: 1px solid #7fb9e0; } .apps .app-chrome { background: #4d5c62; } .apps .app-outlook { background: #a85f25; }
.tray { display: flex; align-items: center; gap: 4px; padding-right: 10px; } .up { transform: rotate(180deg); } .ime { margin: 0 3px 0 4px; }
.tray time { text-align: center; font-size: 6px; line-height: 8px; width: 28px; margin-right: 6px; white-space: nowrap; }
</style>
